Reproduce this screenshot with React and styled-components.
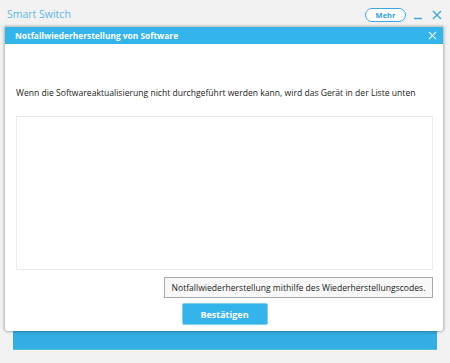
import React from "react";
import styled, { createGlobalStyle } from "styled-components";

const Global = createGlobalStyle`
  html, body { margin: 0; padding: 0; }
  body { background: #f2f2f2; font-family: "Open Sans", "Noto Sans", sans-serif; }
  #root { width: 450px; height: 363px; }
`;

const Window = styled.div`
  position: relative;
  width: 450px;
  height: 363px;
  background: #f2f2f2;
  display: flex;
  flex-direction: column;
  overflow: hidden;
`;

const TopBar = styled.div`
  height: 27px;
  display: flex;
  align-items: center;
  padding: 0 8px 0 7px;
  box-sizing: border-box;
`;

const AppTitle = styled.div`
  font-size: 10.5px;
  color: #5ab9ea;
  flex: 1;
  margin-top: 1px;
`;

const MoreButton = styled.button`
  width: 41px;
  height: 14px;
  border: 1.5px solid #3aa8e0;
  border-radius: 7px;
  background: #fff;
  color: #2f9fd8;
  font-family: inherit;
  font-size: 7.5px;
  font-weight: 700;
  padding: 0;
  line-height: 10px;
  box-sizing: border-box;
  margin-top: 2px;
`;

const IconBtn = styled.div`
  width: ${(p) => p.$w}px;
  height: 10px;
  margin-left: ${(p) => p.$ml}px;
  margin-top: 2px;
  display: flex;
`;

const Main = styled.div`
  flex: 1;
  display: flex;
  flex-direction: column;
  justify-content: flex-end;
`;

const BlueStrip = styled.div`
  height: 19px;
  margin: 0 13px 13px 13px;
  background: #33ade3;
  border-bottom: 1px solid #52bce9;
`;

const Overlay = styled.div`
  position: absolute;
  left: 5px;
  top: 27px;
  width: 438px;
  height: 304px;
  background: #fff;
  box-shadow: 0 0 3px 1px rgba(0, 0, 0, 0.28);
  border-radius: 0 0 3px 3px;
  display: flex;
  flex-direction: column;
`;

const Header = styled.div`
  height: 17px;
  background: #33b4ea;
  display: flex;
  align-items: center;
  padding: 0 6px 0 10px;
`;

const HeaderTitle = styled.div`
  flex: 1;
  color: #fff;
  font-weight: 700;
  font-size: 8.4px;
`;

const Body = styled.div`
  flex: 1;
  display: flex;
  flex-direction: column;
  padding: 43px 10px 0 11px;
`;

const Message = styled.div`
  font-size: 8.6px;
  color: #222;
  white-space: nowrap;
  line-height: 12px;
`;

const ListBox = styled.div`
  margin-top: 17px;
  height: 152px;
  border: 1px solid #ebebeb;
`;

const ActionRow = styled.div`
  display: flex;
  justify-content: flex-end;
  margin-top: 7px;
`;

const GrayButton = styled.button`
  width: 269px;
  height: 21px;
  background: #f8f8f8;
  border: 1px solid #a9a9a9;
  font-family: inherit;
  font-size: 8.6px;
  color: #222;
  padding: 0;
`;

const ConfirmRow = styled.div`
  display: flex;
  justify-content: center;
  margin-top: 5px;
`;

const ConfirmButton = styled.button`
  width: 86px;
  height: 22px;
  background: #33b4ea;
  border: 1px solid #7fcff0;
  border-radius: 2px;
  color: #fff;
  font-family: inherit;
  font-weight: 700;
  font-size: 9px;
  padding: 0;
`;

const XIcon = ({ color = "#3aa8e0", size = 10, w = 1.4 }) => (
  <svg width={size} height={size} viewBox="0 0 10 10">
    <path d="M1 1 L9 9 M9 1 L1 9" stroke={color} strokeWidth={w} fill="none" />
  </svg>
);

export default function App() {
  return (
    <>
      <Global />
      <Window>
        <TopBar>
          <AppTitle>Smart Switch</AppTitle>
          <MoreButton>Mehr</MoreButton>
          <IconBtn $ml={8} $w={9}>
            <svg width="9" height="10" viewBox="0 0 9 10">
              <path d="M0 8.5 H8" stroke="#3aa8e0" strokeWidth="1.4" />
            </svg>
          </IconBtn>
          <IconBtn $ml={9} $w={10}>
            <XIcon />
          </IconBtn>
        </TopBar>
        <Main>
          <BlueStrip />
        </Main>
        <Overlay>
          <Header>
            <HeaderTitle>Notfallwiederherstellung von Software</HeaderTitle>
            <XIcon color="#fff" size={9} w={1.2} />
          </Header>
          <Body>
            <Message>
              Wenn die Softwareaktualisierung nicht durchgeführt werden kann, wird das Gerät in der Liste unten
            </Message>
            <ListBox />
            <ActionRow>
              <GrayButton>Notfallwiederherstellung mithilfe des Wiederherstellungscodes.</GrayButton>
            </ActionRow>
            <ConfirmRow>
              <ConfirmButton>Bestätigen</ConfirmButton>
            </ConfirmRow>
          </Body>
        </Overlay>
      </Window>
    </>
  );
}
